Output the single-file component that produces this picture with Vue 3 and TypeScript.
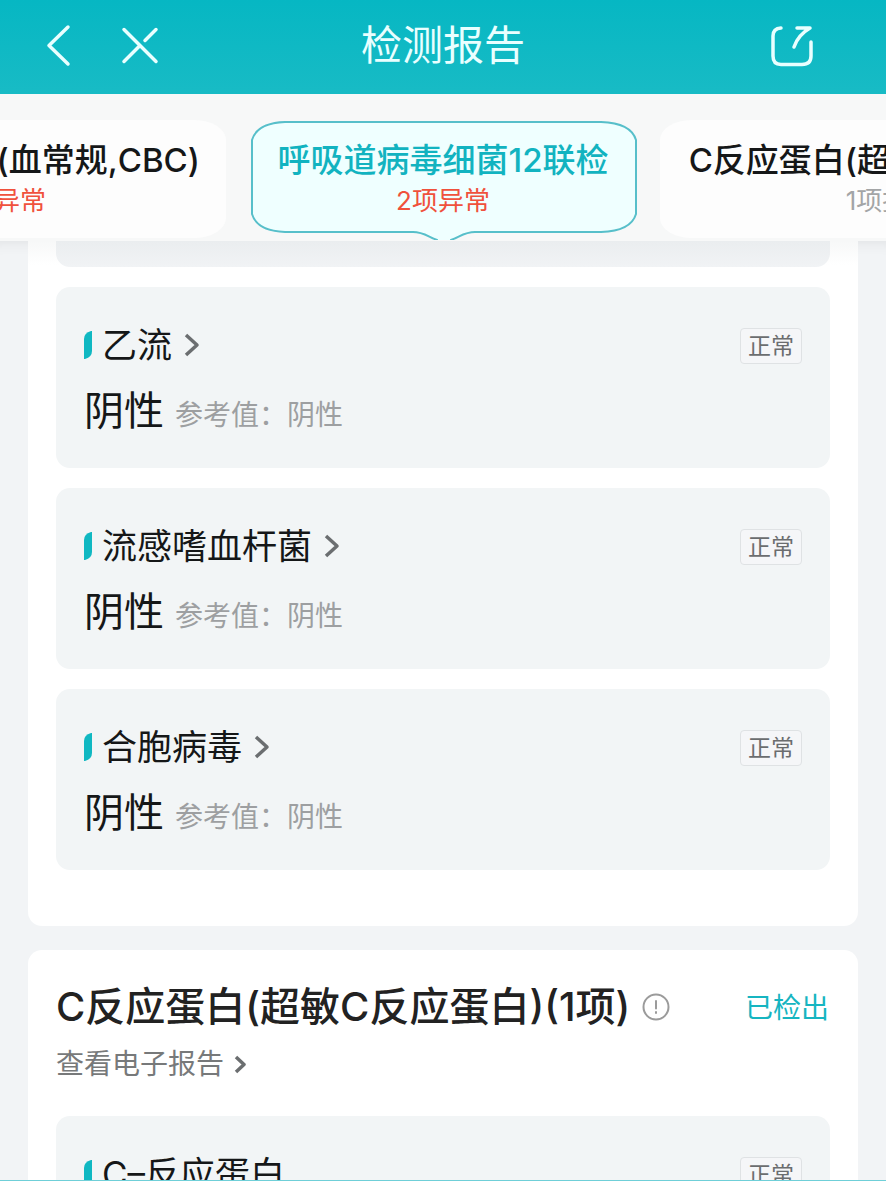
<script setup lang="ts">
interface Item {
  name: string
  value: string
  reference: string
  status: string
}

const respiratoryItems: Item[] = [
  { name: '乙流', value: '阴性', reference: '阴性', status: '正常' },
  { name: '流感嗜血杆菌', value: '阴性', reference: '阴性', status: '正常' },
  { name: '合胞病毒', value: '阴性', reference: '阴性', status: '正常' },
]
</script>

<template>
  <div class="page">
    <header class="topbar">
      <div class="nav">
        <button class="icon-btn" type="button" aria-label="返回">
          <svg width="40" height="48" viewBox="0 0 40 48"><path d="M28 6L9 24.500L28 43" /></svg>
        </button>
        <button class="icon-btn" type="button" aria-label="关闭">
          <svg width="48" height="48" viewBox="0 0 48 48"><path d="M8 8.500L40 40.500M8 40.500L24 24.500M29 19.500L40 8.500" /></svg>
        </button>
      </div>
      <h1 class="title">检测报告</h1>
      <div class="actions">
        <button class="icon-btn" type="button" aria-label="分享">
          <svg width="48" height="48" viewBox="0 0 48 48">
            <path d="M13 7Q5 7.500 5 15V35Q5 43.500 13 43.500H34Q43 43.500 43 35V21M29 7H42Q30 14 26 26" />
          </svg>
        </button>
      </div>
    </header>

    <nav class="tabs">
      <button class="tab tab-prev" type="button">
        <span class="tab-name">(血常规,CBC)</span>
        <span class="tab-note alert">异常</span>
      </button>
      <button class="tab tab-active" type="button">
        <svg class="bubble" viewBox="0 0 388 120" preserveAspectRatio="none" aria-hidden="true">
          <path d="M202 120C212 116 216 112 226 112H352Q382 111 387 94V20Q382 3 352 2H36Q8 3 3 20V94Q8 111 36 112H164C174 112 178 116 188 120" />
        </svg>
        <span class="tab-name">呼吸道病毒细菌12联检</span>
        <span class="tab-note alert">2项异常</span>
      </button>
      <button class="tab tab-next" type="button">
        <span class="tab-name">C反应蛋白(超敏C反应蛋白)</span>
        <span class="tab-note">1项报告</span>
      </button>
    </nav>

    <main class="content">
      <section class="group group-first">
        <div class="card card-tail"></div>
        <article v-for="item in respiratoryItems" :key="item.name" class="card">
          <div class="card-head">
            <a class="name" href="#">
              <svg class="mark" width="8" height="28" viewBox="0 0 8 28"><path d="M8 0V20Q8 26 1 28H0V8Q0 2 7 0Z" /></svg>
              <span>{{ item.name }}</span>
              <svg class="chevron" width="16" height="24" viewBox="0 0 16 24"><path d="M2 2L13 12L2 22" /></svg>
            </a>
            <span class="badge">{{ item.status }}</span>
          </div>
          <p class="result">
            <span class="value">{{ item.value }}</span>
            <span class="reference">参考值：{{ item.reference }}</span>
          </p>
        </article>
      </section>

      <section class="group">
        <div class="group-head">
          <h2>C反应蛋白(超敏C反应蛋白)(1项)</h2>
          <button class="info" type="button" aria-label="说明">
            <svg width="28" height="28" viewBox="0 0 28 28">
              <circle cx="14" cy="14" r="12.500" />
              <path d="M14 8V15.500M14 19V20" />
            </svg>
          </button>
          <span class="detected">已检出</span>
        </div>
        <a class="report" href="#">
          <span>查看电子报告</span>
          <svg class="chevron" width="12" height="20" viewBox="0 0 12 20"><path d="M2 3L10 10.500L2 18" /></svg>
        </a>
        <article class="card">
          <div class="card-head">
            <a class="name" href="#">
              <svg class="mark" width="8" height="28" viewBox="0 0 8 28"><path d="M8 0V20Q8 26 1 28H0V8Q0 2 7 0Z" /></svg>
              <span>C–反应蛋白</span>
            </a>
            <span class="badge">正常</span>
          </div>
        </article>
      </section>
    </main>
    <div class="bottom-line"></div>
  </div>
</template>

<style>
body {
  margin: 0;
}
</style>

<style scoped>
.page {
  height: 100vh;
  display: flex;
  flex-direction: column;
  overflow: hidden;
  background: #f2f4f6;
  color: #151718;
  font-family: Inter, "Noto Sans CJK SC", sans-serif;
}
button {
  border: 0;
  padding: 0;
  background: none;
  font: inherit;
  color: inherit;
}
a {
  color: inherit;
  text-decoration: none;
}
svg {
  display: block;
  flex: none;
  fill: none;
  stroke-linecap: round;
  stroke-linejoin: round;
}
.topbar {
  flex: none;
  height: 94px;
  padding: 0 70px 4px 40px;
  box-sizing: border-box;
  display: grid;
  grid-template-columns: 1fr auto 1fr;
  align-items: center;
  background: linear-gradient(#06b7c3, #18bbc5);
  color: #e9ffff;
}
.nav {
  display: flex;
  gap: 36px;
}
.icon-btn svg {
  stroke: #e9ffff;
  stroke-width: 3.500;
}
.title {
  margin: 0 0 0 30px;
  font-size: 41px;
  line-height: 60px;
  font-weight: 400;
}
.actions {
  display: flex;
  justify-content: flex-end;
}
.tabs {
  flex: none;
  height: 147px;
  padding-top: 26px;
  box-sizing: border-box;
  display: grid;
  grid-template-columns: minmax(0, 1fr) 388px minmax(0, 1fr);
  gap: 23px;
  overflow: hidden;
  background: #f7f8f8;
}
.tab {
  height: 118px;
  padding-top: 18px;
  box-sizing: border-box;
  display: flex;
  flex-direction: column;
  background: #fdfdfd;
  border-radius: 32px / 20px;
  white-space: nowrap;
}
.tab-name {
  font-size: 33px;
  line-height: 44px;
  font-weight: 500;
}
.tab-note {
  font-size: 26px;
  line-height: 38px;
  color: #a3a5a6;
}
.tab-note.alert {
  color: #f0513c;
}
.tab-prev {
  border-top-left-radius: 0;
  border-bottom-left-radius: 0;
  padding-right: 26px;
  align-items: flex-end;
}
.tab-prev .tab-note {
  align-self: flex-start;
  margin-left: -6px;
}
.tab-active {
  position: relative;
  align-items: center;
  background: none;
  color: #12b3c0;
}
.tab-active span {
  position: relative;
}
.bubble {
  position: absolute;
  inset: 0;
  width: 100%;
  height: 120px;
  fill: #efffff;
  stroke: #57bfca;
  stroke-width: 2;
}
.tab-next {
  width: 460px;
  align-items: center;
}
.content {
  flex: 1;
  min-height: 0;
  overflow: hidden;
  padding: 0 28px;
  display: flex;
  flex-direction: column;
  gap: 24px;
  box-shadow: inset 0 16px 16px -16px #00000018;
}
.group {
  flex: none;
  padding: 28px 28px 56px;
  display: flex;
  flex-direction: column;
  gap: 20px;
  background: #fff;
  border-radius: 14px;
}
.group-first {
  padding-top: 0;
  border-radius: 0 0 14px 14px;
  background: linear-gradient(#f7f8f8, #fff 24px);
}
.card {
  height: 181px;
  padding: 32px 28px 0;
  box-sizing: border-box;
  background: #f2f5f6;
  border-radius: 14px;
}
.card-tail {
  height: 26px;
  padding: 0;
  border-radius: 0 0 14px 14px;
  background: linear-gradient(#eaedef, #f1f3f5);
}
.card-head {
  display: flex;
  align-items: center;
  justify-content: space-between;
}
.name {
  display: flex;
  align-items: center;
  font-size: 35px;
  line-height: 52px;
}
.mark {
  margin-right: 10px;
  fill: #10b8c2;
}
.name .chevron {
  margin-left: 12px;
}
.chevron {
  stroke: #6b6e70;
  stroke-width: 3.500;
  stroke-linecap: butt;
}
.badge {
  margin-top: 2px;
  padding: 0 7px;
  border: 1px solid #dfe2e4;
  border-radius: 4px;
  background: #f5f6f8;
  font-size: 23px;
  line-height: 34px;
  color: #6b6d6f;
}
.result {
  margin: 12px 0 0;
  display: flex;
  align-items: baseline;
  gap: 11px;
  line-height: 56px;
}
.value {
  font-size: 40px;
}
.reference {
  font-size: 28px;
  color: #9d9fa1;
}
.group-head {
  display: flex;
  align-items: center;
}
h2 {
  margin: 0;
  font-size: 40px;
  line-height: 58px;
  font-weight: 500;
  color: #222;
  white-space: nowrap;
}
.info {
  margin-left: 12px;
}
.info svg {
  stroke: #9b9b9b;
  stroke-width: 2;
}
.detected {
  margin-left: auto;
  padding: 2px 1px 0 0;
  font-size: 28px;
  line-height: 40px;
  color: #16b5c1;
}
.report {
  align-self: flex-start;
  margin: -12px 0 12px;
  display: flex;
  align-items: center;
  gap: 10px;
  font-size: 28px;
  line-height: 40px;
  color: #77797a;
}
.bottom-line {
  flex: none;
  height: 1px;
  background: #6fcfd8;
}
</style>
